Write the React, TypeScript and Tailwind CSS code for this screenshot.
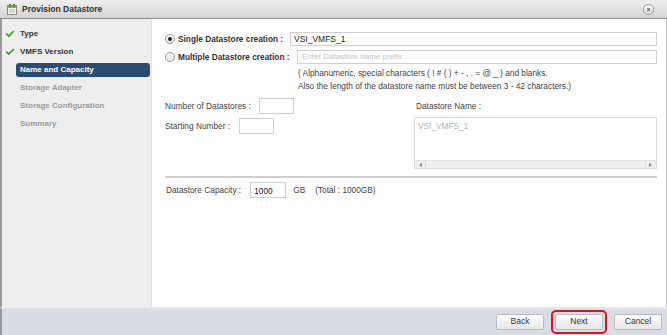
import { Check } from "lucide-react";

const font = "font-['Liberation_Sans',Arial,sans-serif]";

const steps = [
  { label: "Type", state: "done" },
  { label: "VMFS Version", state: "done" },
  { label: "Name and Capacity", state: "active" },
  { label: "Storage Adapter", state: "todo" },
  { label: "Storage Configuration", state: "todo" },
  { label: "Summary", state: "todo" },
];

function TitleIcon() {
  return (
    <svg width="10" height="11" viewBox="0 0 10 11" className="shrink-0">
      <rect x="0.5" y="1.5" width="9" height="9" fill="#f4f4ec" stroke="#8a8a7a" />
      <rect x="1" y="2" width="8" height="2" fill="#8ab04a" />
      <rect x="2" y="0" width="2" height="3" fill="#5f8f2a" />
      <rect x="6" y="0" width="2" height="3" fill="#5f8f2a" />
      <line x1="2" y1="6" x2="8" y2="6" stroke="#b8b8a8" />
      <line x1="2" y1="8" x2="8" y2="8" stroke="#b8b8a8" />
    </svg>
  );
}

function Radio({ checked }: { checked?: boolean }) {
  return (
    <span className="w-[10px] h-[10px] rounded-full border border-[#9a9a9a] bg-gradient-to-b from-white to-[#e4e4e4] flex items-center justify-center shrink-0">
      {checked && <span className="w-[4px] h-[4px] rounded-full bg-[#222]" />}
    </span>
  );
}

function Box({ className, children }: { className?: string; children?: React.ReactNode }) {
  return (
    <div className={`border border-[#cfcfcf] bg-white flex items-center ${className ?? ""}`}>{children}</div>
  );
}

function Btn({ label }: { label: string }) {
  return (
    <div className="w-[48px] h-[16px] rounded-[2px] border border-[#b9bcc2] bg-gradient-to-b from-white to-[#e6e6e6] flex items-center justify-center text-[8.5px] text-[#333]">
      {label}
    </div>
  );
}

export default function App() {
  return (
    <div className={`w-[667px] h-[335px] flex flex-col overflow-hidden bg-white ${font}`}>
      {/* title bar */}
      <div className="h-[19px] shrink-0 flex items-center bg-gradient-to-b from-[#efefef] to-[#d4d4d4] border-b border-[#8f8f8f] pl-[7px] pr-[13px]">
        <TitleIcon />
        <span className="ml-[5px] text-[8.5px] font-bold text-[#333]">Provision Datastore</span>
        <span className="ml-auto w-[11px] h-[11px] rounded-full border border-[#9a9a9a] bg-gradient-to-b from-white to-[#dcdcdc] flex items-center justify-center text-[7px] leading-none text-[#555] font-bold">
          ×
        </span>
      </div>

      <div className="flex-1 flex min-h-0 border-l-2 border-[#9a9a9a]">
        {/* steps */}
        <div className="w-[150px] shrink-0 bg-[#eeeeee] border-r border-[#e2e2e2] pt-[6px]">
          {steps.map((s) => (
            <div key={s.label} className="h-[18px] flex items-center">
              <div className="w-[14px] flex justify-center pl-[2px]">
                {s.state === "done" && <Check size={10} strokeWidth={4} className="text-[#3f9a2e]" />}
              </div>
              {s.state === "active" ? (
                <div className="h-[14px] w-[134px] rounded-[3px] bg-[#2c4c74] flex items-center pl-[4px] text-[8px] font-bold text-white">
                  {s.label}
                </div>
              ) : (
                <div className={`pl-[4px] text-[8px] font-bold ${s.state === "done" ? "text-[#333]" : "text-[#9b9b9b]"}`}>
                  {s.label}
                </div>
              )}
            </div>
          ))}
        </div>

        {/* content */}
        <div className="flex-1 flex flex-col pl-[13px] pr-[9px] pt-[13px] border-r border-[#c4c4c4] text-[8.3px] text-[#444]">
          <div className="flex items-center h-[14px]">
            <Radio checked />
            <span className="ml-[3px] w-[112px] shrink-0 whitespace-nowrap font-bold text-[8.3px] text-[#333]">Single Datastore creation :</span>
            <Box className="flex-1 h-[14px] pl-[3px] text-[8.5px] text-[#222]">VSI_VMFS_1</Box>
          </div>
          <div className="flex items-center h-[14px] mt-[4px]">
            <Radio />
            <span className="ml-[3px] w-[112px] shrink-0 whitespace-nowrap font-bold text-[8.3px] text-[#333]">Multiple Datastore creation :</span>
            <Box className="flex-1 ml-[7px] h-[14px] pl-[4px] text-[8px] text-[#c2c2c2]">Enter Datastore name prefix</Box>
          </div>
          <div className="ml-[133px] mt-[3px] leading-[13px] text-[#444]">
            <div>( Alphanumeric, special characters ( ! # ( ) + - , . = @ _ ) and blanks.</div>
            <div>Also the length of the datastore name must be between 3 - 42 characters.)</div>
          </div>

          <div className="flex mt-[5px]">
            <div className="w-[249px] shrink-0">
              <div className="flex items-center h-[16px]">
                <span>Number of Datastores :</span>
                <Box className="ml-[8px] w-[35px] h-[16px]" />
              </div>
              <div className="flex items-center h-[16px] mt-[4px]">
                <span>Starting Number :</span>
                <Box className="ml-[9px] w-[35px] h-[16px]" />
              </div>
            </div>
            <div className="flex-1 flex flex-col">
              <div className="h-[17px] flex items-center pl-[2px]">Datastore Name :</div>
              <div className="mt-[2px] h-[52px] border border-[#dcdcdc] flex flex-col">
                <div className="flex-1 pl-[3px] pt-[2px] text-[#b4b4b4]">VSI_VMFS_1</div>
                <div className="h-[8px] bg-[#efefef] border-t border-[#e2e2e2] flex items-center justify-between px-[1px]">
                  <span className="w-[10px] h-[7px] border-r border-[#dcdcdc] flex items-center justify-center">
                    <span className="border-y-[2px] border-y-transparent border-r-[3px] border-r-[#888]" />
                  </span>
                  <span className="w-[10px] h-[7px] border-l border-[#dcdcdc] flex items-center justify-center">
                    <span className="border-y-[2px] border-y-transparent border-l-[3px] border-l-[#888]" />
                  </span>
                </div>
              </div>
            </div>
          </div>

          <div className="mt-[7px] h-[2px] bg-[#cfcfcf]" />

          <div className="flex items-center mt-[4px] h-[16px] pl-[1px]">
            <span>Datastore Capacity :</span>
            <Box className="ml-[9px] w-[36px] h-[16px] pl-[3px] pt-[2px] text-[#222]">1000</Box>
            <span className="ml-[7px]">GB</span>
            <span className="ml-[10px]">(Total : 1000GB)</span>
          </div>
        </div>
      </div>

      {/* footer */}
      <div className="h-[28px] shrink-0 bg-[#d9dce3] border-t-2 border-[#e4e6ea] border-l-2 border-l-[#9a9a9a] flex items-center justify-end pr-[5px] gap-[7px] pb-[1px]">
        <Btn label="Back" />
        <div className="rounded-[5px] border-[2px] border-[#d8121f] p-[2px] flex">
          <Btn label="Next" />
        </div>
        <Btn label="Cancel" />
      </div>
    </div>
  );
}
